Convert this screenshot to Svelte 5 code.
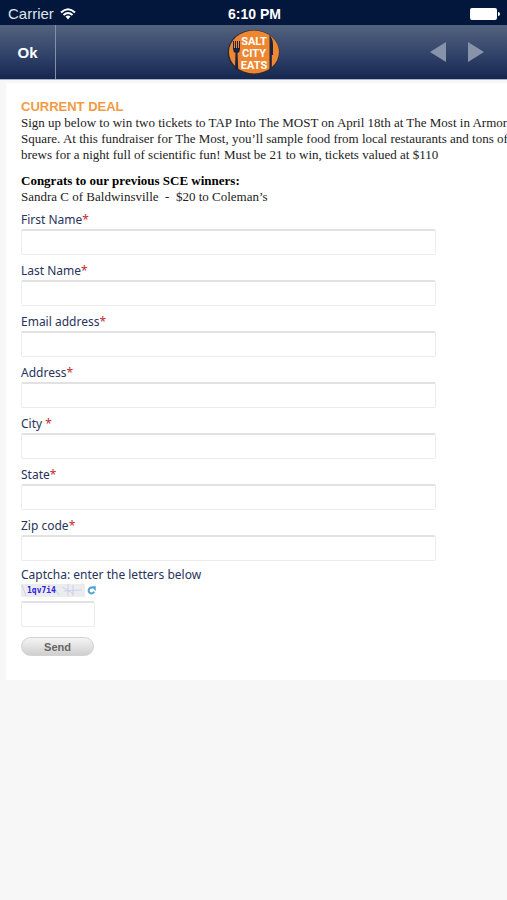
<script lang="ts">
	type Field = {
		id: string;
		label: string;
		value: string;
	};

	let fields: Field[] = $state([
		{ id: "first-name", label: "First Name", value: "" },
		{ id: "last-name", label: "Last Name", value: "" },
		{ id: "email", label: "Email address", value: "" },
		{ id: "address", label: "Address", value: "" },
		{ id: "city", label: "City ", value: "" },
		{ id: "state", label: "State", value: "" },
		{ id: "zip", label: "Zip code", value: "" },
	]);

	let captcha = $state("");
</script>

<header>
	<div class="status">
		<div class="carrier">
			<span>Carrier</span>
			<svg class="wifi" viewBox="0 0 16 12" aria-hidden="true">
				<path d="M1 4.4Q8-2 15 4.4M3.5 7.1Q8 3 12.5 7.1" />
				<path class="dot" d="M5.5 8.6Q8 6.6 10.5 8.6L8 11.5Z" />
			</svg>
		</div>
		<strong>6:10 PM</strong>
		<svg class="battery" viewBox="0 0 32 14" aria-hidden="true">
			<rect x="1" y="1" width="27" height="12" rx="2" />
			<path d="M29 5Q31 5 31 7T29 9Z" />
		</svg>
	</div>

	<nav>
		<button class="ok" type="button">Ok</button>
		<svg class="logo" viewBox="0 0 54 48" role="img" aria-label="Salt City Eats">
			<ellipse cx="26.5" cy="24.5" rx="26" ry="22.5" fill="#2b2a35" />
			<ellipse cx="27" cy="24" rx="25" ry="21.5" fill="#ee8732" />
			<g fill="#1a2340">
				<path d="M6 13h1v7h1v-7h1v7h1v-7h1v7h1v-7h1v8q0 3-2.500 4l.7 15.500-1.400 1.200-1.800-1.400L8.500 25Q6 24 6 21Z" />
				<path d="M42.500 7q3.500 4 3.500 10v10h-1.200v12.500L42.500 42Z" />
			</g>
			<g class="name">
				<text x="27" y="17">SALT</text>
				<text x="27" y="29">CITY</text>
				<text x="27" y="41">EATS</text>
			</g>
		</svg>
		<div class="arrows">
			<button type="button" aria-label="Previous">
				<svg viewBox="0 0 16 20"><path d="M16 0v20L0 10Z" /></svg>
			</button>
			<button type="button" aria-label="Next">
				<svg viewBox="0 0 16 20"><path d="M0 0v20L16 10Z" /></svg>
			</button>
		</div>
	</nav>
</header>

<main>
	<h1>CURRENT DEAL</h1>
	<p>
		Sign up below to win two tickets to TAP Into The MOST on April 18th at The Most in Armory<br />
		Square. At this fundraiser for The Most, you’ll sample food from local restaurants and tons of<br />
		brews for a night full of scientific fun! Must be 21 to win, tickets valued at $110
	</p>
	<p>
		<b>Congrats to our previous SCE winners:</b><br />
		Sandra C of Baldwinsville&nbsp; -&nbsp; $20 to Coleman’s
	</p>

	<form onsubmit={(e) => e.preventDefault()}>
		{#each fields as field (field.id)}
			<div class="field">
				<label for={field.id}>{field.label}<span class="required">*</span></label>
				<input id={field.id} type="text" bind:value={field.value} required />
			</div>
		{/each}

		<div class="captcha">
			<label for="captcha">Captcha: enter the letters below</label>
			<div class="challenge">
				<svg class="code" viewBox="0 0 64 13">
					<rect width="64" height="13" fill="#ececee" />
					<path
						d="M1 1l4 11M32 2l6 9M47 0v12M52 1v11M43 7l18-1M41 3l12 7"
						fill="none"
						stroke="#c3cbe9"
						stroke-width=".8"
					/>
					<text x="6" y="9">1qv7i4</text>
				</svg>
				<button type="button" aria-label="New letters">
					<svg viewBox="0 0 10 10">
						<path d="M8 6.200A3.200 3.200 0 1 1 6.500 2.200" fill="none" stroke="#4da3d4" stroke-width="2.200" />
						<path d="M4.500 .3H9.700V5.500Z" fill="#4da3d4" />
					</svg>
				</button>
			</div>
			<input id="captcha" type="text" bind:value={captcha} />
		</div>

		<button class="send" type="submit">Send</button>
	</form>
</main>

<style>
	:global(body) {
		background: #f7f7f7;
		overflow-x: hidden;
	}

	button {
		padding: 0;
		border: 0;
		background: none;
		cursor: pointer;
	}

	svg {
		display: block;
	}

	header {
		color: #fff;
		font-family: "Liberation Sans", Arial, sans-serif;
		border-bottom: 1px solid #a9b6c9;
	}

	.status {
		display: grid;
		grid-template-columns: 1fr auto 1fr;
		align-items: center;
		height: 25px;
		padding: 2px 6px 0 8px;
		box-sizing: border-box;
		background: #03173d;
		font-size: 14px;
	}

	.carrier {
		display: flex;
		align-items: center;
		gap: 6px;
		color: #dfe4ed;
		font-size: 15px;
	}

	.wifi {
		width: 16px;
		height: 12px;
		fill: none;
		stroke: #fff;
		stroke-width: 2;
	}

	.wifi .dot {
		fill: #fff;
		stroke: none;
	}

	.battery {
		justify-self: end;
		width: 32px;
		height: 14px;
		fill: #fff;
	}

	nav {
		display: grid;
		grid-template-columns: 1fr auto 1fr;
		align-items: center;
		height: 54px;
		background: linear-gradient(#53627d, #31436a 55%, #15274f);
	}

	.ok {
		width: 56px;
		height: 54px;
		border-right: 1px solid #8390a8;
		color: #fff;
		font: bold 15px "Liberation Sans", Arial, sans-serif;
	}

	.logo {
		width: 54px;
		height: 48px;
	}

	.name {
		fill: #fff;
		font: bold 11px "Liberation Sans Narrow", Roboto, sans-serif;
		text-anchor: middle;
	}

	.arrows {
		display: flex;
		justify-content: flex-end;
		gap: 22px;
		padding-right: 23px;
	}

	.arrows svg {
		width: 16px;
		height: 20px;
		fill: #8793a9;
	}

	main {
		margin: 3px 0 0 6px;
		padding: 16px 15px 24px;
		overflow: hidden;
		background: #fff;
		color: #222;
		font: 13px/16px "Liberation Serif", "Times New Roman", serif;
		white-space: nowrap;
	}

	h1 {
		margin: 0;
		color: #f39a45;
		font: bold 13px/16px "Liberation Sans", Arial, sans-serif;
	}

	p {
		margin: 0 0 10px;
	}

	b {
		color: #000;
	}

	form {
		margin-top: -4px;
	}

	.field {
		margin-bottom: 7px;
	}

	.captcha {
		margin-top: -2px;
	}

	label {
		display: block;
		color: #27345c;
		font: 12px/18px "Trebuchet MS", "Noto Sans", sans-serif;
		white-space: pre;
	}

	.required {
		color: #c22d2d;
	}

	input {
		display: block;
		box-sizing: border-box;
		width: 100%;
		max-width: 415px;
		height: 26px;
		padding: 2px 6px;
		border: 1px solid #ececec;
		border-top: 2px solid #e2e2e2;
		border-radius: 2px;
		background: #fff;
		font: 13px "Liberation Sans", Arial, sans-serif;
	}

	.challenge {
		display: flex;
		align-items: center;
		gap: 2px;
		margin-bottom: 4px;
	}

	.code {
		width: 64px;
		height: 13px;
	}

	.code text {
		fill: #2a22dc;
		font: bold 8px "DejaVu Sans Mono", monospace;
	}

	.challenge button svg {
		width: 9px;
		height: 9px;
	}

	.captcha input {
		width: 74px;
	}

	.send {
		display: block;
		width: 73px;
		height: 19px;
		margin-top: 10px;
		border: 1px solid #d2d2d2;
		border-radius: 10px;
		background: linear-gradient(#f4f4f4, #cfcfcf);
		color: #666;
		font: bold 11px "Liberation Sans", Arial, sans-serif;
	}
</style>
